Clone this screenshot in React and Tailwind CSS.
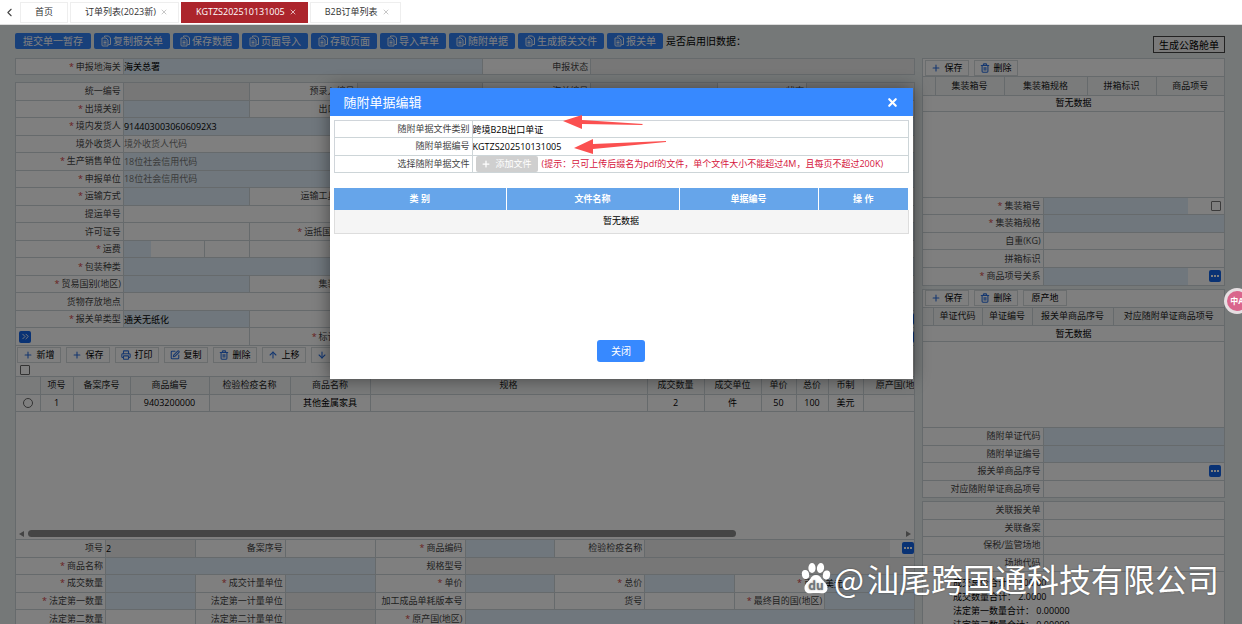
import { useId } from 'react';
import {
  ArrowDown, ArrowUp, ChevronLeft, ChevronsRight, Plus, Printer, SquarePen, Trash2, X,
} from 'lucide-react';

const spans = {
  1: 'col-span-1',
  2: 'col-span-2',
  3: 'col-span-3',
  5: 'col-span-5',
  7: 'col-span-7',
};

const tones = {
  plain: 'bg-white',
  blue: 'bg-[#e0effa]',
  gray: 'bg-[#eeeeee]',
};

const MAIN_GRID = 'grid grid-cols-[108fr_126fr_108fr_126fr_108fr_127fr_89fr_108fr] auto-rows-fr';
const GOODS_GRID = 'grid grid-cols-10 auto-rows-fr';
const SIDE_GRID = 'grid grid-cols-[121fr_182fr] auto-rows-fr';

/** Small blue "..." button that sits at the end of a field */
function MoreButton() {
  return (
    <button aria-label="更多" className="flex h-3 w-3 shrink-0 items-center justify-center gap-px rounded-xs bg-[#1264e8]">
      <i className="h-0.5 w-0.5 bg-white" />
      <i className="h-0.5 w-0.5 bg-white" />
      <i className="h-0.5 w-0.5 bg-white" />
    </button>
  );
}

/** Label cell plus value cell; both are direct children of the form grid.
 *  more="tight" puts the button flush with the cell's right edge. */
function Field({ label, required, value, placeholder, tone = 'plain', span = 1, more, check, children }) {
  const id = useId();
  return (
    <>
      <label htmlFor={id} className="flex min-w-0 items-center justify-end gap-0.5 overflow-hidden border-r border-b border-[#cdd5d8] pr-0.5 whitespace-nowrap text-[#444]">
        {required && <span className="text-[#d04040]">*</span>}
        {label}
      </label>
      <div className={`flex min-w-0 items-center border-r border-b border-[#cdd5d8] ${spans[span]}`}>
        {children || (
          <input
            id={id}
            defaultValue={value}
            placeholder={placeholder}
            className={`h-full w-full min-w-0 flex-1 text-black outline-none placeholder:text-[#777] ${tones[tone]}`}
          />
        )}
        {more && (
          <span className={`flex shrink-0 justify-end ${more === 'tight' ? 'w-6' : 'w-9 pr-[3px]'}`}>
            <MoreButton />
          </span>
        )}
        {check && (
          <span className="flex w-9 shrink-0 justify-end pr-[3px]">
            <input type="checkbox" aria-label={`${label}选择`} className="h-2.5 w-2.5 appearance-none rounded-[1px] border border-[#777]" />
          </span>
        )}
      </div>
    </>
  );
}

function SmallButton({ icon: Icon, children }) {
  return (
    <button className="flex h-4 min-w-11 items-center justify-center gap-[3px] border border-[#d5dadc] bg-white px-1 whitespace-nowrap text-black">
      {Icon && <Icon size={10} strokeWidth={2.6} className="text-[#2a6fe0]" />}
      {children}
    </button>
  );
}

/** Two stacked sheets, the front one with text lines */
function SheetsIcon() {
  return (
    <svg width="10" height="12" viewBox="0 0 20 24" fill="none" stroke="currentColor" strokeWidth="1.8" aria-hidden="true">
      <path d="M7 4V2h8l4 4v13h-4" />
      <path d="M2 6h8l4 4v12H4a2 2 0 0 1-2-2z" />
      <path d="M5 12h6M5 15h6M5 18h6" />
    </svg>
  );
}

function TopButton({ children, plain }) {
  return (
    <button className={`flex h-4 items-center gap-0.5 rounded-xs bg-[#3080f5] whitespace-nowrap text-white ${plain ? 'px-2' : 'px-[7px]'}`}>
      {!plain && <SheetsIcon />}
      {children}
    </button>
  );
}

function Tab({ label, active, closable = true }) {
  return (
    <div className={`flex h-[21px] items-center gap-1 border px-3.5 whitespace-nowrap ${active ? 'border-[#ac252c] bg-[#ac252c] font-medium text-white' : 'border-[#eee] bg-white text-[#333]'}`}>
      <button>{label}</button>
      {closable && (
        <button aria-label={`关闭 ${label}`} className={active ? '-mr-1 text-white' : '-mr-1 text-[#aaa]'}>
          <X size={8} />
        </button>
      )}
    </div>
  );
}

/** Table with a header and a single "no data" row */
function EmptyTable({ cols, children }) {
  return (
    <table className="w-full table-fixed border-collapse">
      {children}
      <thead>
        <tr className="h-[18px] bg-[#f4f6f6]">
          {cols.map((c, i) => (
            <th key={i} className="border-r border-b border-[#cdd5d8] p-0 font-normal whitespace-nowrap text-[#222]">{c}</th>
          ))}
        </tr>
      </thead>
      <tbody>
        <tr className="h-4">
          <td colSpan={cols.length} className="border-r border-b border-[#cdd5d8] p-0 text-center text-black">暂无数据</td>
        </tr>
      </tbody>
    </table>
  );
}

function DeclarationForm() {
  return (
    <div className={`${MAIN_GRID} h-[263px]`}>
      <Field label="统一编号" tone="gray" />
      <Field label="预录入编号" tone="gray" />
      <Field label="海关编号" tone="gray" />
      <Field label="状态" tone="gray" />

      <Field label="出境关别" required tone="blue" />
      <Field label="出口日期" />
      <Field label="申报日期" />
      <Field label="备案号" />

      <Field label="境内发货人" required value="9144030030606092X3" tone="blue" span={7} />
      <Field label="境外收货人" placeholder="境外收货人代码" span={7} />
      <Field label="生产销售单位" required placeholder="18位社会信用代码" tone="blue" span={7} />
      <Field label="申报单位" required placeholder="18位社会信用代码" tone="blue" span={7} />

      <Field label="运输方式" required tone="blue" />
      <Field label="运输工具名称" />
      <Field label="航次号" span={3} />

      <Field label="提运单号" span={7} />

      <Field label="许可证号" />
      <Field label="运抵国(地区)" required tone="blue" />
      <Field label="指运港" required tone="blue" span={3} />

      <Field label="运费" required>
        <input aria-label="运费标志" className="h-full w-[27px] min-w-0 bg-[#e0effa]" />
        <input aria-label="运费率" className="h-full w-[54px] min-w-0 border-r border-[#cdd5d8]" />
        <input aria-label="运费币制" className="h-full min-w-0 flex-1" />
      </Field>
      <Field label="保费" required />
      <Field label="杂费" span={3} />

      <Field label="包装种类" required tone="blue" span={7} />

      <Field label="贸易国别(地区)" required tone="blue" />
      <Field label="集装箱数" />
      <Field label="随附单证" span={3} />

      <Field label="货物存放地点" span={7} />

      <Field label="报关单类型" required value="通关无纸化" tone="blue" />
      <Field label="备注" span={5} more="tight" />

      <div className="col-span-2 flex items-center border-r border-b border-[#cdd5d8] pl-[3px]">
        <button aria-label="展开" className="flex h-3 w-3 items-center justify-center rounded-xs bg-[#1264e8] text-white">
          <ChevronsRight size={11} />
        </button>
      </div>
      <Field label="标记唛码" required span={5} more="tight" />
    </div>
  );
}

const goodsCols = [
  ['', 'w-6'],
  ['项号', 'w-[33px]'],
  ['备案序号', 'w-[57px]'],
  ['商品编号', 'w-[79px]'],
  ['检验检疫名称', 'w-[81px]'],
  ['商品名称', 'w-20'],
  ['规格', 'w-[277px]'],
  ['成交数量', 'w-[57px]'],
  ['成交单位', 'w-[57px]'],
  ['单价', 'w-[35px]'],
  ['总价', 'w-8'],
  ['币制', 'w-[35px]'],
  ['原产国(地区)', 'w-[76px]'],
];
const goodsRow = ['1', '', '9403200000', '', '其他金属家具', '', '2', '件', '50', '100', '美元', ''];

function GoodsList() {
  return (
    <>
      <div className="flex h-[17px] items-center gap-[5px] overflow-hidden pl-px">
        <SmallButton icon={Plus}>新增</SmallButton>
        <SmallButton icon={Plus}>保存</SmallButton>
        <SmallButton icon={Printer}>打印</SmallButton>
        <SmallButton icon={SquarePen}>复制</SmallButton>
        <SmallButton icon={Trash2}>删除</SmallButton>
        <SmallButton icon={ArrowUp}>上移</SmallButton>
        <SmallButton icon={ArrowDown}>下移</SmallButton>
      </div>
      <div className="flex h-[14px] items-center border-b border-[#cdd5d8] pl-1">
        <input type="checkbox" aria-label="全选" className="h-2.5 w-2.5 appearance-none rounded-[1px] border border-[#666]" />
      </div>
      <div className="h-[151px] overflow-hidden">
        <table className="w-[923px] table-fixed border-collapse text-center">
          <thead>
            <tr className="h-[17px] bg-[#f4f6f6]">
              {goodsCols.map(([name, width]) => (
                <th key={name} className={`${width} border-r border-b border-[#cdd5d8] p-0 font-normal whitespace-nowrap text-[#222]`}>{name}</th>
              ))}
            </tr>
          </thead>
          <tbody>
            <tr className="h-[17px]">
              <td className="border-r border-b border-[#cdd5d8] p-0">
                <input type="radio" name="goods" aria-label="选择第1项" className="mx-auto block h-2.5 w-2.5 appearance-none rounded-full border border-[#666]" />
              </td>
              {goodsRow.map((cell, i) => (
                <td key={i} className="border-r border-b border-[#cdd5d8] p-0 whitespace-nowrap text-black">{cell}</td>
              ))}
            </tr>
          </tbody>
        </table>
      </div>
      <div className="flex h-3 items-center gap-1 border-b border-[#cdd5d8] px-[3px]">
        <i className="border-y-[3px] border-r-[5px] border-y-transparent border-r-[#888]" />
        <div className="flex-1">
          <div className="h-[7px] w-[81%] rounded-full bg-[#8a8a8a]" />
        </div>
        <i className="border-y-[3px] border-l-[5px] border-y-transparent border-l-[#888]" />
      </div>
    </>
  );
}

function GoodsForm() {
  return (
    <div className={`${GOODS_GRID} h-[88px]`}>
      <Field label="项号" value="2" tone="gray" />
      <Field label="备案序号" />
      <Field label="商品编码" required tone="blue" />
      <Field label="检验检疫名称" tone="gray" span={3} more="tight" />

      <Field label="商品名称" required tone="blue" span={3} />
      <Field label="规格型号" tone="gray" span={5} />

      <Field label="成交数量" required tone="blue" />
      <Field label="成交计量单位" required tone="blue" />
      <Field label="单价" required tone="blue" />
      <Field label="总价" required tone="blue" />
      <Field label="币制" required value="美元" tone="blue" />

      <Field label="法定第一数量" required tone="blue" />
      <Field label="法定第一计量单位" tone="gray" />
      <Field label="加工成品单耗版本号" />
      <Field label="货号" />
      <Field label="最终目的国(地区)" required tone="blue" />

      <Field label="法定第二数量" />
      <Field label="法定第二计量单位" tone="gray" />
      <Field label="原产国(地区)" required tone="blue" span={5} />
    </div>
  );
}

function SidePanels() {
  return (
    <aside className="flex w-[303px] shrink-0 flex-col gap-[3px]">
      <section className="border-t border-l border-[#cdd5d8] bg-white">
        <div className="flex h-[18px] items-center gap-[5px] border-r border-b border-[#cdd5d8] pl-0.5">
          <SmallButton icon={Plus}>保存</SmallButton>
          <SmallButton icon={Trash2}>删除</SmallButton>
        </div>
        <EmptyTable cols={['', '集装箱号', '集装箱规格', '拼箱标识', '商品项号']}>
          <colgroup>
            <col className="w-3" /><col className="w-[69px]" /><col className="w-[83px]" /><col className="w-[69px]" /><col />
          </colgroup>
        </EmptyTable>
        <div className="h-[86px] border-r border-b border-[#cdd5d8]" />
        <div className={`${SIDE_GRID} h-[88px]`}>
          <Field label="集装箱号" required tone="blue" check />
          <Field label="集装箱规格" required tone="blue" />
          <Field label="自重(KG)" />
          <Field label="拼箱标识" />
          <Field label="商品项号关系" required tone="blue" more />
        </div>
      </section>

      <section className="border-t border-l border-[#cdd5d8] bg-white">
        <div className="flex h-[18px] items-center gap-[5px] border-r border-b border-[#cdd5d8] pl-0.5">
          <SmallButton icon={Plus}>保存</SmallButton>
          <SmallButton icon={Trash2}>删除</SmallButton>
          <SmallButton>原产地</SmallButton>
        </div>
        <EmptyTable cols={['', '单证代码', '单证编号', '报关单商品序号', '对应随附单证商品项号']}>
          <colgroup>
            <col className="w-2.5" /><col className="w-[49px]" /><col className="w-[50px]" /><col className="w-[81px]" /><col />
          </colgroup>
        </EmptyTable>
        <div className="h-[86px] border-r border-b border-[#cdd5d8]" />
        <div className={`${SIDE_GRID} h-[70px]`}>
          <Field label="随附单证代码" tone="blue" />
          <Field label="随附单证编号" tone="blue" />
          <Field label="报关单商品序号" more />
          <Field label="对应随附单证商品项号" />
        </div>
      </section>

      <section className="border-t border-l border-[#cdd5d8] bg-white">
        <div className={`${SIDE_GRID} h-[70px]`}>
          <Field label="关联报关单" />
          <Field label="关联备案" />
          <Field label="保税/监管场地" />
          <Field label="场地代码" />
        </div>
        <div className="border-r border-[#cdd5d8] pt-1 pl-[30px] leading-[14px] text-black">
          <p>成交总价合计： 100.00</p>
          <p>成交数量合计： 2.0000</p>
          <p>法定第一数量合计： 0.00000</p>
          <p>法定第二数量合计： 0.00000</p>
        </div>
      </section>
    </aside>
  );
}

function AttachmentDialog() {
  return (
    <div role="dialog" aria-labelledby="dialog-title" className="relative flex h-[291px] w-[583px] flex-col bg-white shadow-[0_0_16px_rgba(0,0,0,0.45)]">
      <header className="flex h-[28px] shrink-0 items-center justify-between bg-[#3789ff] px-3.5 text-white">
        <h2 id="dialog-title" className="text-[13px]">随附单据编辑</h2>
        <button aria-label="关闭窗口"><X size={13} strokeWidth={4} /></button>
      </header>

      <div className="mx-1 mt-1 grid h-[53px] auto-rows-fr grid-cols-[138px_1fr] border-t border-l border-[#d0d5da]">
        <Field label="随附单据文件类别" value="跨境B2B出口单证" />
        <Field label="随附单据编号" value="KGTZS202510131005" />
        <Field label="选择随附单据文件">
          <button disabled className="ml-[3px] flex h-4 w-[62px] shrink-0 items-center justify-center gap-1 rounded-xs bg-[#cfcfcf] text-white">
            <Plus size={10} strokeWidth={3} />
            添加文件
          </button>
          <span className="ml-1 whitespace-nowrap text-[#d5143c]">
            (提示：只可上传后缀名为pdf的文件，单个文件大小不能超过4M，且每页不超过200K)
          </span>
        </Field>
      </div>

      <div className="mx-1 mt-[15px]">
        <table className="w-full table-fixed border-collapse text-center">
          <thead>
            <tr className="h-[22px] bg-[#66a5ea] text-white">
              <th className="w-[172px] border-r border-white p-0 font-bold">类 别</th>
              <th className="w-[173px] border-r border-white p-0 font-bold">文件名称</th>
              <th className="w-[139px] border-r border-white p-0 font-bold">单据编号</th>
              <th className="p-0 font-bold">操 作</th>
            </tr>
          </thead>
          <tbody>
            <tr className="h-[23px] border border-t-0 border-[#ddd] bg-[#f5f5f5]">
              <td colSpan={4} className="p-0 text-black">暂无数据</td>
            </tr>
          </tbody>
        </table>
      </div>

      <div className="mt-auto flex justify-center pb-[17px]">
        <button className="h-[22px] w-12 rounded-[3px] bg-[#3789ff] text-[10px] text-white">关闭</button>
      </div>

      {/* hand-drawn pointers to the two filled-in values */}
      <svg className="pointer-events-none absolute top-[25px] left-[230px]" width="110" height="45" viewBox="0 0 110 45" fill="#fb5050" aria-hidden="true">
        <path d="M3 8 L22 2 L22 7 L83 11 L82 12 L22 11 L22 16 Z" />
        <path d="M14 35 L33 26 L33 31 L106 28 L106 29 L33 36 L33 41 Z" />
      </svg>
    </div>
  );
}

function Watermark() {
  return (
    <div className="pointer-events-none absolute right-[23px] bottom-[26px] flex items-center gap-[3px] font-['Noto_Sans_CJK_SC',sans-serif] text-[32px] leading-10 whitespace-nowrap text-white [text-shadow:0_0_2px_rgba(0,0,0,0.4)]">
      <svg width="30" height="32" viewBox="0 0 30 32" aria-hidden="true">
        <g fill="#fff">
          <ellipse cx="4.5" cy="12.500" rx="3.600" ry="4.500" transform="rotate(-12 4.500 12.500)" />
          <ellipse cx="11" cy="6" rx="3.600" ry="5" />
          <ellipse cx="19.500" cy="6" rx="3.600" ry="5" transform="rotate(8 19.500 6)" />
          <ellipse cx="25.500" cy="13" rx="3.600" ry="4.500" transform="rotate(12 25.500 13)" />
          <path d="M15 13c3 0 4.500 2 6 4.200 1.700 2.500 5.500 4.300 5.500 8.800 0 4-2.800 5.500-6 5.200-3.500-.4-7.500-.4-11 0-3.200.3-6-1.200-6-5.200 0-4.500 3.800-6.300 5.500-8.800C10.500 15 12 13 15 13z" />
        </g>
        <text x="15" y="28" textAnchor="middle" fontSize="12" fontWeight="600" fill="#6f7578">du</text>
      </svg>
      <span className="flex items-center gap-[3px]">
        <span>@</span>
        <span>汕尾跨国通科技有限公司</span>
      </span>
    </div>
  );
}

export default function App() {
  return (
    <div className="relative flex h-screen flex-col overflow-hidden bg-white font-['Open_Sans','Noto_Sans_CJK_SC',sans-serif] text-[9px] leading-[12px]">
      <nav className="flex h-[25px] shrink-0 items-center gap-0.5 border-b border-[#ddd]">
        <button aria-label="向左滚动" className="flex w-[18px] justify-center text-[#444]"><ChevronLeft size={13} /></button>
        <Tab label="首页" closable={false} />
        <Tab label="订单列表(2023新)" />
        <Tab label="KGTZS202510131005" active />
        <Tab label="B2B订单列表" />
      </nav>

      <main className="relative flex-1 overflow-hidden bg-[#ebf1f0] pr-[17px] pl-[15px]">
        <div className="flex items-start justify-between pt-2 pb-[5px] text-[10px]">
          <div className="flex items-center gap-[3px]">
            <TopButton plain>提交单一暂存</TopButton>
            <TopButton>复制报关单</TopButton>
            <TopButton>保存数据</TopButton>
            <TopButton>页面导入</TopButton>
            <TopButton>存取页面</TopButton>
            <TopButton>导入草单</TopButton>
            <TopButton>随附单据</TopButton>
            <TopButton>生成报关文件</TopButton>
            <TopButton>报关单</TopButton>
            <span className="text-black">是否启用旧数据：</span>
          </div>
          <button className="mt-[3px] h-[17px] border border-[#444] bg-[#f4f4f4] px-[5px] text-black">生成公路舱单</button>
        </div>

        <div className="flex items-start gap-[7px]">
          <div className="min-w-0 flex-1">
            <div className={`${MAIN_GRID} mb-[7px] h-[17px] border-t border-l border-[#cdd5d8] bg-white`}>
              <Field label="申报地海关" required value="海关总署" tone="blue" span={3} />
              <Field label="申报状态" tone="gray" span={3} />
            </div>
            <div className="border-t border-l border-[#cdd5d8] bg-white">
              <DeclarationForm />
              <div className="border-r border-[#cdd5d8]">
                <GoodsList />
              </div>
              <GoodsForm />
              <div className="h-6" />
            </div>
          </div>
          <SidePanels />
        </div>

        <div className="absolute inset-0 flex items-start justify-center bg-black/50 pt-[63px]">
          <AttachmentDialog />
        </div>
      </main>

      <button aria-label="翻译" className="absolute top-[288px] -right-2 flex h-[26px] w-[26px] items-center justify-center rounded-full bg-[#e6dfe2]">
        <span className="flex h-5 w-5 items-center justify-center rounded-full bg-[#d9658c] text-[8px] font-bold text-white">中A</span>
      </button>
      <Watermark />
    </div>
  );
}
